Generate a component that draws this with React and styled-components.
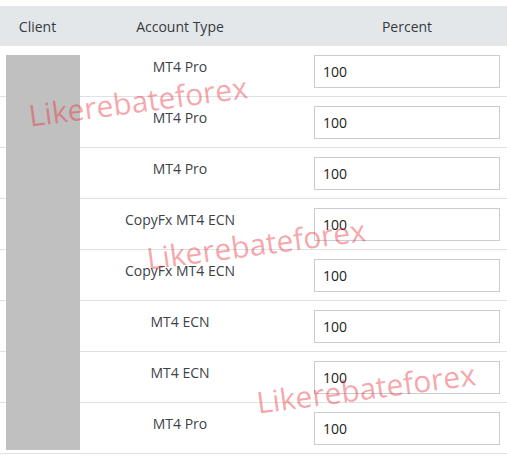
import React from 'react';
import styled, { createGlobalStyle } from 'styled-components';

const GlobalStyle = createGlobalStyle`
  html, body {
    margin: 0;
    padding: 0;
    background: #ffffff;
  }
  body {
    font-family: "Open Sans", "Liberation Sans", sans-serif;
    font-size: 14px;
    color: #3b4046;
  }
`;

const Page = styled.div`
  position: relative;
  width: 507px;
  height: 458px;
  padding-top: 6px;
  box-sizing: border-box;
  overflow: hidden;
`;

const Table = styled.div`
  display: flex;
  flex-direction: column;
`;

const HeaderRow = styled.div`
  display: grid;
  grid-template-columns: 75px 210px 222px;
  height: 40px;
  background: #e4e7ea;
  align-items: center;
`;

const HeadCell = styled.div`
  text-align: center;
  color: #353a40;
  padding: ${(p) => (p.$pad ? '0 7px 0 29px' : '0')};
`;

const Row = styled.div`
  display: grid;
  grid-template-columns: 75px 210px 222px;
  height: 50px;
  border-bottom: 1px solid #dde2e6;
`;

const Cell = styled.div`
  display: flex;
  justify-content: center;
  align-items: ${(p) => (p.$middle ? 'center' : 'flex-start')};
  padding: ${(p) => (p.$pad ? '0 7px 0 29px' : '11px 0 0')};
  color: #3d4248;
`;

const Input = styled.input`
  width: 100%;
  height: 33px;
  box-sizing: border-box;
  border: 1px solid #c6cdd3;
  background: #fff;
  padding: 0 8px;
  font-family: "Open Sans", "Liberation Sans", sans-serif;
  font-size: 14px;
  color: #222;
  outline: none;
`;

const Redact = styled.div`
  position: absolute;
  left: 6px;
  top: 55px;
  width: 74px;
  height: 395px;
  background: #c0c0c0;
`;

const Watermark = styled.div`
  position: absolute;
  left: ${(p) => p.$x}px;
  top: ${(p) => p.$y}px;
  transform: translate(-50%, -50%) rotate(-7.5deg);
  font-family: "Open Sans", "Liberation Sans", sans-serif;
  font-size: 30px;
  color: rgba(236, 40, 50, 0.42);
  white-space: nowrap;
  pointer-events: none;
`;

const rows = [
  'MT4 Pro',
  'MT4 Pro',
  'MT4 Pro',
  'CopyFx MT4 ECN',
  'CopyFx MT4 ECN',
  'MT4 ECN',
  'MT4 ECN',
  'MT4 Pro',
];

const App = () => {
  return (
    <Page>
      <GlobalStyle />
      <Table>
        <HeaderRow>
          <HeadCell>Client</HeadCell>
          <HeadCell>Account Type</HeadCell>
          <HeadCell $pad>Percent</HeadCell>
        </HeaderRow>
        {rows.map((type, i) => (
          <Row key={i}>
            <Cell />
            <Cell>{type}</Cell>
            <Cell $pad $middle>
              <Input defaultValue="100" />
            </Cell>
          </Row>
        ))}
      </Table>
      <Redact />
      <Watermark $x={138} $y={101}>Likerebateforex</Watermark>
      <Watermark $x={256} $y={244}>Likerebateforex</Watermark>
      <Watermark $x={366} $y={388}>Likerebateforex</Watermark>
    </Page>
  );
};

export default App;
